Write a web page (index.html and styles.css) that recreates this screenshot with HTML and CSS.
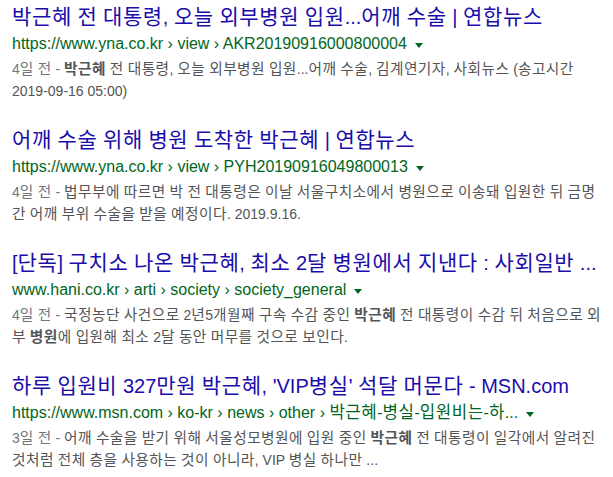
FILE: index.html
```html
<!DOCTYPE html>
<html lang="ko">
<head>
<meta charset="utf-8">
<link rel="stylesheet" href="styles.css">
</head>
<body>
<div class="results">
  <div class="g">
    <h3 class="title">박근혜 전 대통령, 오늘 외부병원 입원...어깨 수술 | 연합뉴스</h3>
    <div class="url"><cite>https://www.yna.co.kr › view › AKR20190916000800004</cite><span class="arrow"></span></div>
    <div class="st"><span class="f">4일 전 - </span><b>박근혜</b> 전 대통령, 오늘 외부병원 입원...어깨 수술, 김계연기자, 사회뉴스 (송고시간<br>2019-09-16 05:00)</div>
  </div>
  <div class="g">
    <h3 class="title">어깨 수술 위해 병원 도착한 박근혜 | 연합뉴스</h3>
    <div class="url"><cite>https://www.yna.co.kr › view › PYH20190916049800013</cite><span class="arrow"></span></div>
    <div class="st"><span class="f">4일 전 - </span>법무부에 따르면 박 전 대통령은 이날 서울구치소에서 병원으로 이송돼 입원한 뒤 금명<br>간 어깨 부위 수술을 받을 예정이다. 2019.9.16.</div>
  </div>
  <div class="g">
    <h3 class="title">[단독] 구치소 나온 박근혜, 최소 2달 병원에서 지낸다 : 사회일반 ...</h3>
    <div class="url"><cite>www.hani.co.kr › arti › society › society_general</cite><span class="arrow"></span></div>
    <div class="st"><span class="f">4일 전 - </span>국정농단 사건으로 2년5개월째 구속 수감 중인 <b>박근혜</b> 전 대통령이 수감 뒤 처음으로 외<br>부 <b>병원</b>에 입원해 최소 2달 동안 머무를 것으로 보인다.</div>
  </div>
  <div class="g">
    <h3 class="title">하루 입원비 327만원 박근혜, 'VIP병실' 석달 머문다 - MSN.com</h3>
    <div class="url"><cite>https://www.msn.com › ko-kr › news › other › 박근혜-병실-입원비는-하...</cite><span class="arrow"></span></div>
    <div class="st"><span class="f">3일 전 - </span>어깨 수술을 받기 위해 서울성모병원에 입원 중인 <b>박근혜</b> 전 대통령이 일각에서 알려진<br>것처럼 전체 층을 사용하는 것이 아니라, VIP 병실 하나만 ...</div>
  </div>
</div>
<script src="script.js"></script>
</body>
</html>
```
FILE: styles.css
```css
html, body {
  margin: 0;
  padding: 0;
  background: #ffffff;
}
body {
  font-family: "Liberation Sans", Arial, "Noto Sans CJK KR", sans-serif;
}
.results {
  padding: 4px 0 0 12px;
  display: flex;
  flex-direction: column;
  gap: 25px;
}
.g {
  display: flex;
  flex-direction: column;
}
.title {
  margin: 0;
  font-size: 20px;
  line-height: 26px;
  font-weight: normal;
  color: #1a0dab;
  white-space: nowrap;
}
.url {
  display: flex;
  align-items: center;
  padding-top: 2px;
  line-height: 24px;
  font-size: 16px;
  white-space: nowrap;
}
.url cite {
  font-style: normal;
  color: #006621;
}
.arrow {
  width: 0;
  height: 0;
  margin-left: 8px;
  margin-top: 2px;
  border-top: 5px solid #006621;
  border-left: 4px solid transparent;
  border-right: 4px solid transparent;
}
.st {
  margin-top: 2px;
  font-size: 14px;
  line-height: 22px;
  color: #545454;
  white-space: nowrap;
}
.st .f {
  color: #70757a;
}
.st b {
  color: #52565a;
}
.k {
  font-family: "Noto Sans CJK KR", sans-serif;
  font-size: 105%;
  letter-spacing: 0.03em;
  line-height: 1;
}
```
FILE: script.js
```js
(function () {
  var re = /[\uAC00-\uD7A3\u3131-\u318E]+/g;
  var roots = document.querySelectorAll('.title, .url cite, .st');
  roots.forEach(function (root) {
    var walker = document.createTreeWalker(root, NodeFilter.SHOW_TEXT, null);
    var nodes = [];
    while (walker.nextNode()) nodes.push(walker.currentNode);
    nodes.forEach(function (node) {
      var text = node.nodeValue;
      if (!re.test(text)) return;
      re.lastIndex = 0;
      var frag = document.createDocumentFragment();
      var last = 0, m;
      while ((m = re.exec(text)) !== null) {
        if (m.index > last) frag.appendChild(document.createTextNode(text.slice(last, m.index)));
        var s = document.createElement('span');
        s.className = 'k';
        s.textContent = m[0];
        frag.appendChild(s);
        last = m.index + m[0].length;
      }
      if (last < text.length) frag.appendChild(document.createTextNode(text.slice(last)));
      node.parentNode.replaceChild(frag, node);
    });
  });
})();
```
